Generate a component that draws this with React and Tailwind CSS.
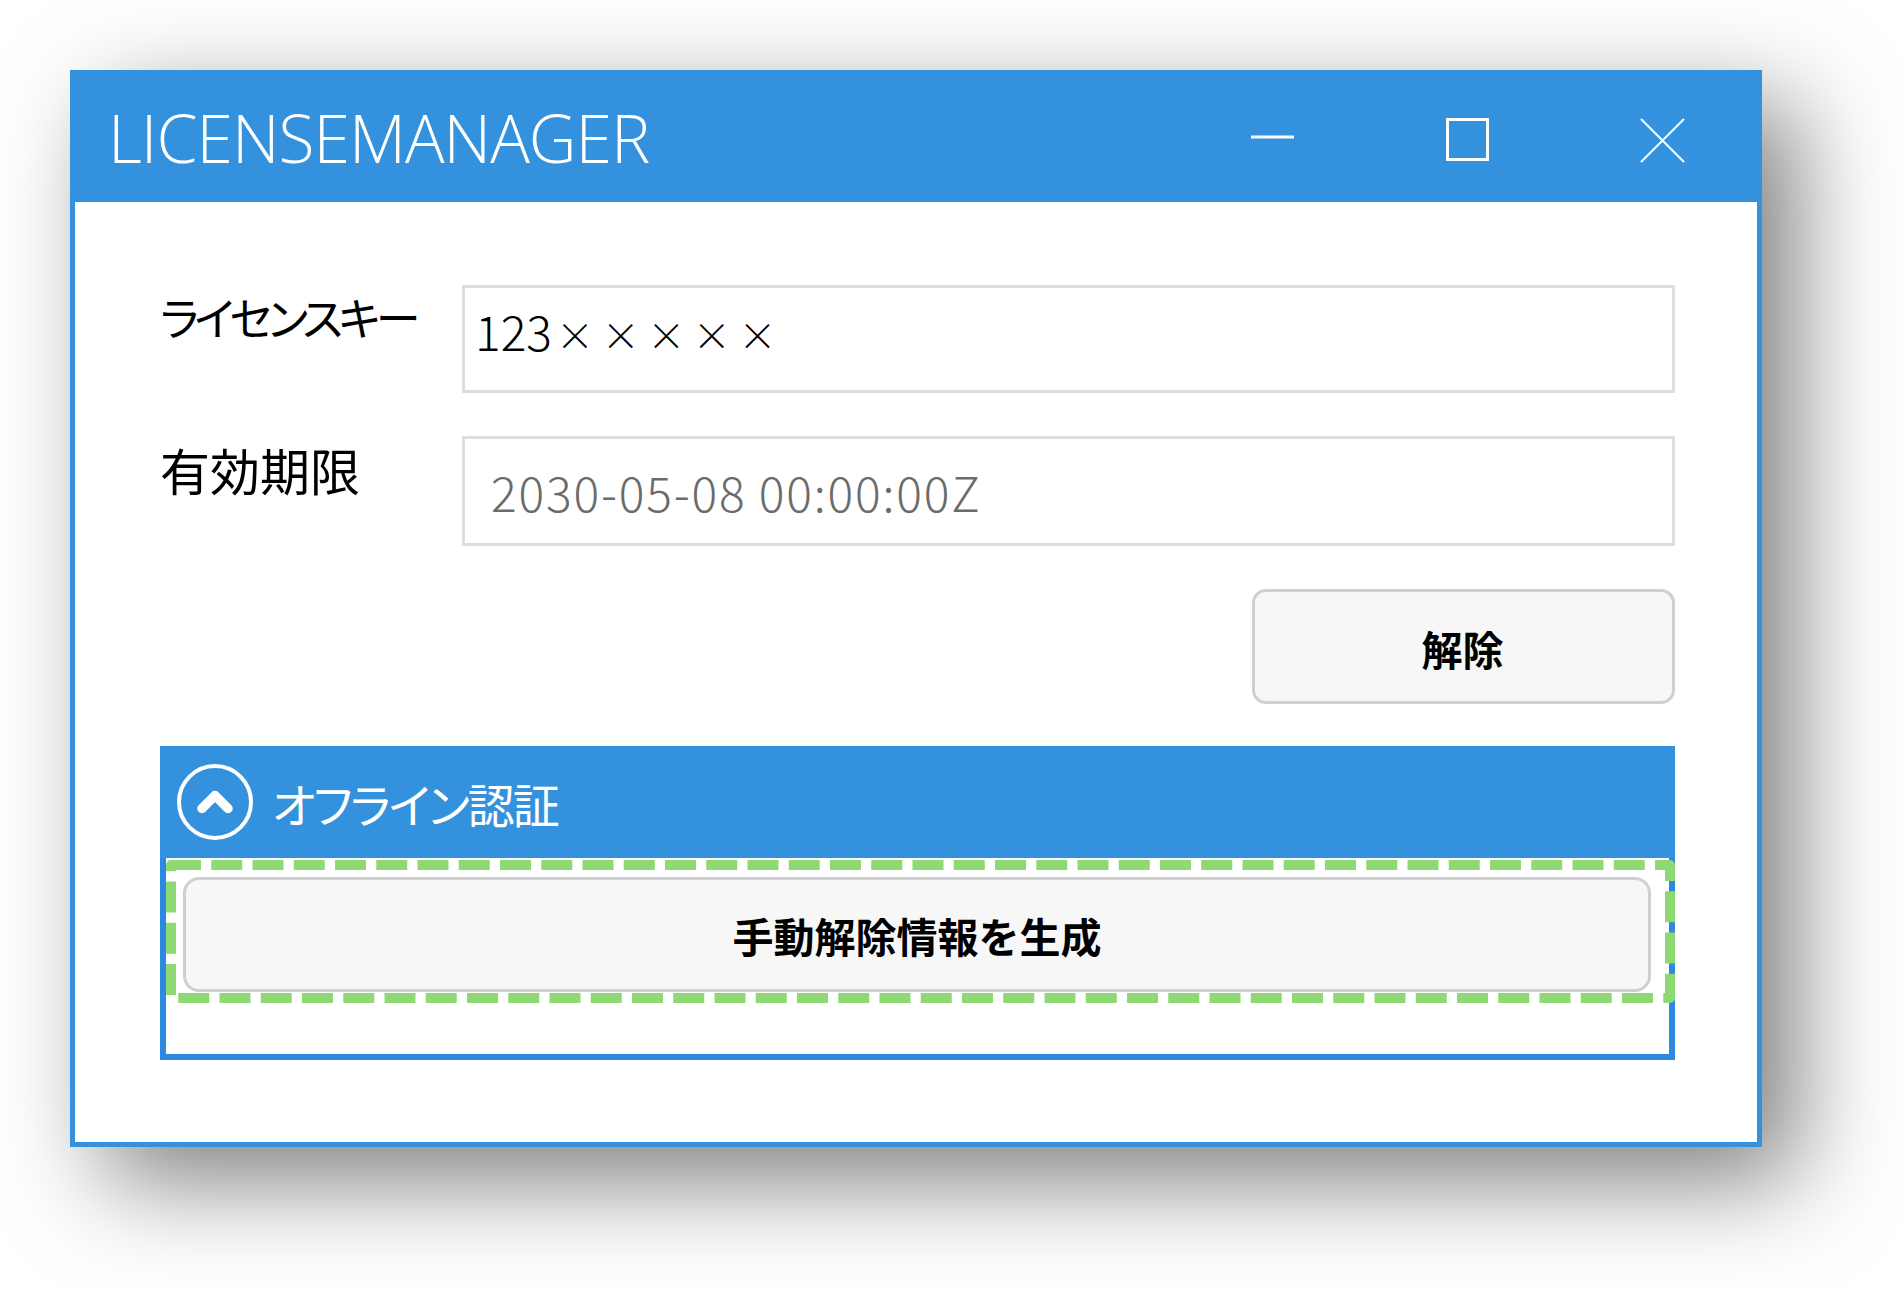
import { ChevronUp } from 'lucide-react';

// ── Title bar with the three window buttons ────────────────────────────────
function TitleBar() {
  return (
    <div className="h-[132px] bg-[#3391de] flex items-center pl-[33px] shrink-0">
      <span className="w-[1174px] text-[66px] leading-none font-light text-white tracking-[-1px] font-['Open_Sans',sans-serif] pt-[2px]">LICENSEMANAGER</span>
      <svg width="450" height="50" viewBox="0 0 450 50" className="mt-[9px] -ml-[31px]" fill="none" stroke="white">
        <path d="M0 21H43" strokeWidth="3" />
        <rect x="196.5" y="3.5" width="40" height="40" strokeWidth="3" />
        <path d="M390 3L433 46M433 3L390 46" strokeWidth="2" />
      </svg>
    </div>
  );
}

function Field({ label, labelClass, boxClass, children }) {
  return (
    <div className="flex">
      <div className={`w-[302px] text-black leading-none ${labelClass}`}>{label}</div>
      <div className={`flex-1 border-[3px] border-[#dedede] bg-white flex ${boxClass}`}>{children}</div>
    </div>
  );
}

export default function App() {
  return (
    <div className="min-h-screen bg-white pl-[70px] pt-[70px] overflow-hidden font-['Noto_Sans_CJK_JP',sans-serif]">
      <div className="w-[1692px] h-[1077px] border-[5px] border-t-0 border-[#3391de] bg-white flex flex-col shadow-[34px_34px_94px_rgba(0,0,0,0.5)]">
        <TitleBar />

        <div className="pl-[85px] pr-[82px] pt-[83px] flex flex-col">
          <Field label="ライセンスキー" labelClass="text-[45px] font-normal mt-[9px] [font-feature-settings:'palt'] tracking-[-4.5px] whitespace-nowrap" boxClass="h-[108px] pl-[10px] pt-[18px]">
            <span className="text-[48px] leading-none font-light text-black">123</span>
            <span className="ml-[4px] mt-[4px] text-[38px] leading-[48px] font-light text-black tracking-[7.6px]">×××××</span>
          </Field>

          <div className="mt-[43px]">
            <Field label="有効期限" labelClass="text-[50px] font-normal mt-[8px]" boxClass="h-[110px] pl-[26px] pt-[28px]">
              <span className="text-[48px] leading-none font-light text-[#6b6b6b] tracking-[1.8px]">2030-05-08 00:00:00Z</span>
            </Field>
          </div>

          <div className="flex justify-end mt-[43px]">
            <button className="w-[423px] h-[115px] rounded-[14px] border-[3px] border-[#cfcfcf] bg-[#f7f7f7] text-[41px] font-bold text-black leading-none pt-[3px] pr-[2px]">解除</button>
          </div>

          {/* Offline section */}
          <div className="relative mt-[42px] h-[314px] border-[6px] border-[#2b8ae0] bg-white">
            <div className="-mx-[6px] -mt-[6px] h-[112px] bg-[#3391de] flex items-center pl-[17px]">
              <div className="w-[76px] h-[76px] rounded-full border-[4px] border-white flex items-center justify-center text-white">
                <ChevronUp size={52} strokeWidth={4.4} />
              </div>
              <span className="ml-[19px] text-[47px] font-normal text-white leading-none [font-feature-settings:'palt'] tracking-[-2.1px]">オフライン認証</span>
            </div>
            <button className="absolute left-[17px] top-[125px] w-[1468px] h-[115px] rounded-[16px] border-[3px] border-[#cfcfcf] bg-[#f7f7f7] text-[41px] font-bold text-black leading-none pt-[2px]">手動解除情報を生成</button>
            {/* green dashed callout */}
            <svg className="absolute -left-[6px] -top-[6px]" width="1515" height="314" viewBox="160 746 1515 314" fill="none">
              <path d="M171 865H1670V998H171Z" stroke="#8fd975" strokeWidth="10" strokeDasharray="31 10.25" strokeDashoffset="1" strokeLinejoin="round" />
            </svg>
          </div>
        </div>
      </div>
    </div>
  );
}
